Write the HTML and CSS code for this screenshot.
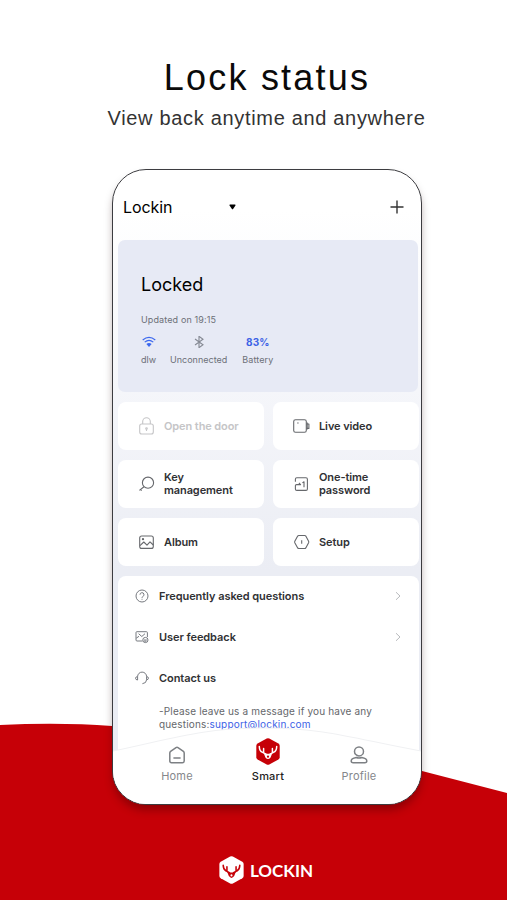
FILE: index.html
```
<!DOCTYPE html>
<html lang="en">
<head>
  <meta charset="UTF-8">
  <meta name="viewport" content="width=device-width, initial-scale=1.0">
  <title>Lockin</title>
  <link rel="stylesheet" href="styles.css">
</head>
<body>
  <svg class="wave" viewBox="0 0 507 180" aria-hidden="true">
    <path d="M0 5Q60 2 112 6Q270 17 422 51L507 73V180H0Z" fill="#c60007"/>
  </svg>
  <main class="page">
    <h1 class="page__title">Lock status</h1>
    <p class="page__subtitle">View back anytime and anywhere</p>

    <div class="phone">
      <header class="header">
        <span class="header__name">Lockin</span>
        <svg class="header__arrow" viewBox="0 0 7 6"><path d="M.8.5H6.2L6.6 1.3 3.9 5.3H3.1L.4 1.3Z"/></svg>
        <svg class="header__plus" viewBox="0 0 14 14"><path d="M7 .5V13.5M.5 7H13.5" stroke="#333" stroke-width="1.4"/></svg>
      </header>

      <section class="status">
        <h2 class="status__title">Locked</h2>
        <p class="status__time">Updated on 19:15</p>
        <div class="status__list">
          <div class="status__item status__item_wifi">
            <svg class="status__icon" viewBox="0 0 14 12" fill="none" stroke="#3c68ee" stroke-width="1.2">
              <path d="M.7 4Q7-1.2 13.3 4M2.7 6.1Q7 2.6 11.3 6.1"/>
              <path d="M4.4 8Q7 5.8 9.6 8L7 11Z" fill="#3c68ee" stroke="none"/>
            </svg>
            <span>dlw</span>
          </div>
          <div class="status__item status__item_bluetooth">
            <svg class="status__icon" viewBox="0 0 14 12" fill="none" stroke="#858993" stroke-width="1.1">
              <path d="M3 3L11 8.8 7 11.7V.3L11 3.2 3 9"/>
            </svg>
            <span>Unconnected</span>
          </div>
          <div class="status__item status__item_battery">
            <b class="status__percent">83%</b>
            <span>Battery</span>
          </div>
        </div>
      </section>

      <section class="actions">
        <div class="card card_disabled">
          <svg class="card__icon" viewBox="0 0 18 18">
            <rect x="1.7" y="7" width="13.6" height="10" rx="2"/>
            <path d="M4.7 7V4.6a3.8 3.8 0 0 1 7.6 0V7M8.5 12.3v1.8"/>
            <circle cx="8.5" cy="11.5" r=".8"/>
          </svg>
          <span>Open the door</span>
        </div>
        <div class="card">
          <svg class="card__icon" viewBox="0 0 18 18">
            <rect x=".7" y="2.7" width="12.6" height="12.6" rx="1.8"/>
            <path d="M13.3 7h2.6v4.4h-2.6M14.2 5.6v7M4.2 6h1.4"/>
          </svg>
          <span>Live video</span>
        </div>
        <div class="card">
          <svg class="card__icon" viewBox="0 0 18 18">
            <circle cx="10" cy="7.7" r="5.6"/>
            <path d="M6 11.8L1.4 15.4M2.6 14.5l1 1.1"/>
          </svg>
          <span>Key<br>management</span>
        </div>
        <div class="card">
          <svg class="card__icon" viewBox="0 0 18 18">
            <path d="M2.4 6.7V4.2Q2.4 2.8 3.8 2.8H13Q14.4 2.8 14.4 4.2V14Q14.4 15.4 13 15.4H3.8Q2.4 15.4 2.4 14V10.6Q2.4 9.6 3.6 9.6H7.6L5.9 8M9.4 7.9L11 6.8V12.2"/>
          </svg>
          <span>One-time<br>password</span>
        </div>
        <div class="card">
          <svg class="card__icon" viewBox="0 0 18 18">
            <rect x="1.7" y="3" width="13.6" height="12.4" rx="2"/>
            <path d="M2 12.6L5.8 9 9 12.2 12 8.8 15.3 12"/>
            <circle cx="5" cy="6.2" r=".6"/>
          </svg>
          <span>Album</span>
        </div>
        <div class="card">
          <svg class="card__icon" viewBox="0 0 18 18">
            <path d="M5.7 2.5H11.8Q12.4 2.5 12.8 3.1L15.6 8.3Q15.9 9 15.6 9.7L12.8 14.9Q12.4 15.5 11.8 15.5H5.7Q5.1 15.5 4.7 14.9L1.8 9.7Q1.5 9 1.8 8.3L4.7 3.1Q5.1 2.5 5.7 2.5ZM8.7 7.3V10.8"/>
          </svg>
          <span>Setup</span>
        </div>
      </section>

      <section class="help">
        <div class="help__row">
          <svg class="help__icon" viewBox="0 0 14 14">
            <circle cx="7" cy="7" r="6"/>
            <path d="M5 5.7a2 2 0 1 1 2.8 1.8Q7 7.9 7 8.8M7 9.8v.9"/>
          </svg>
          <span>Frequently asked questions</span>
          <svg class="help__arrow" viewBox="0 0 6 10"><path d="M1 1.2L5 5 1 8.8"/></svg>
        </div>
        <div class="help__row">
          <svg class="help__icon" viewBox="0 0 14 14">
            <path d="M7.5 11H2Q1 11 1 10V2.5Q1 1.7 2 1.7H11.4Q12.4 1.7 12.4 2.6V7M3.6 3.7L6.8 6.5 10 3.7M1.2 8.2L4 6.3"/>
            <circle cx="10.4" cy="10" r="2.6"/><path d="M9 10h2.8M9.3 11.2h2"/>
          </svg>
          <span>User feedback</span>
          <svg class="help__arrow" viewBox="0 0 6 10"><path d="M1 1.2L5 5 1 8.8"/></svg>
        </div>
        <div class="help__row">
          <svg class="help__icon" viewBox="0 0 14 14">
            <path d="M2.6 9V5.6a4.5 4.5 0 0 1 9 0V8.8Q11.4 12.3 7.4 12.7M2.6 5.6Q.5 5.8.5 7.2 .5 8.8 2.6 9M11.6 5.6Q13.5 5.8 13.5 7.2 13.5 8.6 11.6 8.8"/>
          </svg>
          <span>Contact us</span>
        </div>
        <p class="help__text">-Please leave us a message if you have any<br>questions:<a class="help__link">support@lockin.com</a></p>
      </section>

      <nav class="tabs">
        <svg class="tabs__back" viewBox="0 0 307 77" preserveAspectRatio="none">
          <path d="M0 24C62 11 88 1 151 1C214 1 245 13 307 24V77H0Z" fill="#fff"/>
          <path d="M0 24C62 11 88 1 151 1C214 1 245 13 307 24" fill="none" stroke="#f0f1f3"/>
        </svg>
        <div class="tab tab_home">
          <svg class="tab__icon" viewBox="0 0 18 18">
            <path d="M1.8 7Q1.8 6 2.6 5.4L8 1.6Q9 1 10 1.6L15.4 5.4Q16.2 6 16.2 7V15Q16.2 16.7 14.5 16.7H3.5Q1.8 16.7 1.8 15ZM5.4 12H12.6"/>
          </svg>
          <span>Home</span>
        </div>
        <div class="tab tab_smart">
          <svg class="tab__logo" viewBox="0 0 24 27">
            <path d="M10.7.5Q12 0 13.3.5L22.4 5.6Q23.7 6.4 23.7 7.8V19.2Q23.7 20.6 22.4 21.4L13.3 26.5Q12 27 10.7 26.5L1.6 21.4Q.3 20.6.3 19.2V7.8Q.3 6.4 1.6 5.6Z" fill="#c60007"/>
            <path d="M3.3 8.4Q3.4 13 6.6 14.4L10 16.2M20.7 8.4Q20.6 13 17.4 14.4L14 16.2M7.6 10.4V14.6M16.4 10.4V14.6" fill="none" stroke="#fff" stroke-width="1.5" stroke-linecap="round"/>
            <path d="M7.6 14.8L10.5 15.8H13.5L16.4 14.8 14.6 19.4Q12 22.8 9.4 19.4Z" fill="#fff"/><circle cx="12" cy="18.7" r="1.1" fill="#c60007"/>
          </svg>
          <span>Smart</span>
        </div>
        <div class="tab tab_profile">
          <svg class="tab__icon" viewBox="0 0 18 18">
            <circle cx="9" cy="5.4" r="4.5"/>
            <path d="M6.2 11.5Q1.2 12.4 1.2 15Q1.2 16.7 3 16.7H15Q16.8 16.7 16.8 15Q16.8 12.4 11.8 11.5Q9 12.6 6.2 11.5Z"/>
          </svg>
          <span>Profile</span>
        </div>
      </nav>
    </div>

    <footer class="brand">
      <svg class="brand__logo" viewBox="0 0 24 27">
        <path d="M10.7.5Q12 0 13.3.5L22.4 5.6Q23.7 6.4 23.7 7.8V19.2Q23.7 20.6 22.4 21.4L13.3 26.5Q12 27 10.7 26.5L1.6 21.4Q.3 20.6.3 19.2V7.8Q.3 6.4 1.6 5.6Z" fill="#fff"/>
        <path d="M4 9Q4 13 6.8 14.4L10 16.2M20 9Q20 13 17.2 14.4L14 16.2M7.6 10.4V14.6M16.4 10.4V14.6" fill="none" stroke="#c60007" stroke-width="1.5" stroke-linecap="round"/>
        <path d="M7.6 14.8L10.5 15.8H13.5L16.4 14.8 14.6 19.4Q12 22.8 9.4 19.4Z" fill="#c60007"/><circle cx="12" cy="18.7" r="1" fill="#fff"/>
      </svg>
      <span class="brand__name">LOCKIN</span>
    </footer>
  </main>
</body>
</html>
```
FILE: styles.css
```
* {
  box-sizing: border-box;
}

body {
  position: relative;
  margin: 0;
  height: 900px;
  overflow: hidden;
  background: #fff;
  font-family: Inter, "Liberation Sans", sans-serif;
}

h1,
h2,
p {
  margin: 0;
  font-weight: 400;
}

svg {
  display: block;
  flex: none;
}

/* red wave behind the phone */
.wave {
  position: absolute;
  left: 0;
  bottom: 0;
  width: 507px;
  height: 180px;
}

.page {
  position: relative;
  display: flex;
  flex-direction: column;
  align-items: center;
  height: 900px;
  padding-top: 57px;
}

.page__title {
  padding-left: 27px;
  height: 42px;
  line-height: 42px;
  font-family: "Liberation Sans", sans-serif;
  font-size: 36px;
  letter-spacing: 2.2px;
  color: #0a0a0a;
}

.page__subtitle {
  padding-left: 26px;
  height: 38px;
  line-height: 38px;
  font-family: "Liberation Sans", sans-serif;
  font-size: 20px;
  letter-spacing: 0.68px;
  color: #333;
}

.phone {
  display: flex;
  flex-direction: column;
  width: 310px;
  height: 636px;
  margin: 32px 0 0 27px;
  overflow: hidden;
  border: 1.5px solid #3c3c40;
  border-radius: 34px;
  background: linear-gradient(#fff 0, #fff 40px, #f5f6fa 220px, #ebedf4 400px);
  box-shadow: 0 6px 8px -1px rgba(40, 0, 0, 0.35);
}

.header {
  display: flex;
  align-items: center;
  height: 70px;
  padding: 4px 17px 0 10px;
}

.header__name {
  width: 106px;
  font-size: 16px;
  letter-spacing: -0.1px;
  color: #000;
}

.header__arrow {
  width: 7px;
  height: 6px;
}

.header__plus {
  width: 14px;
  height: 14px;
  margin-left: auto;
}

.status {
  height: 152px;
  margin: 0 3px 0 5px;
  padding: 34px 23px;
  border-radius: 7px;
  background: #e7eaf5;
}

.status__title {
  height: 22px;
  line-height: 22px;
  font-size: 18px;
  color: #000;
}

.status__time {
  margin-top: 18px;
  line-height: 12px;
  font-size: 9px;
  letter-spacing: 0.12px;
  color: #6d7078;
}

.status__list {
  display: flex;
  margin-top: 10px;
}

.status__item {
  display: flex;
  flex-direction: column;
  align-items: center;
  gap: 6px;
  line-height: 12px;
  font-size: 9px;
  color: #6d7078;
}

.status__item_bluetooth {
  margin-left: 14px;
}

.status__item_battery {
  margin-left: 15px;
  letter-spacing: 0.1px;
}

.status__icon {
  width: 14px;
  height: 12px;
}

.status__percent {
  height: 12px;
  font-size: 10px;
  color: #3c62e6;
}

.actions {
  display: grid;
  grid-template-columns: 146px 146px;
  grid-auto-rows: 48px;
  gap: 10px 9px;
  margin: 10px 0 0 5px;
}

.card {
  display: flex;
  align-items: center;
  gap: 8px;
  padding-left: 20px;
  border-radius: 8px;
  background: #fff;
  line-height: 13px;
  font-size: 11px;
  font-weight: 600;
  letter-spacing: -0.1px;
  color: #303134;
}

.card_disabled {
  color: #c5c5c7;
}

.card__icon {
  width: 18px;
  height: 18px;
  fill: none;
  stroke: #66686c;
  stroke-width: 1.1;
  stroke-linejoin: round;
}

.card_disabled .card__icon {
  stroke: #c5c5c7;
}

.help {
  flex: 1;
  margin: 10px 2px 0 5px;
  border-radius: 8px 8px 0 0;
  background: #fff;
}

.help__row {
  display: flex;
  align-items: center;
  gap: 10px;
  height: 41px;
  padding: 0 18px 2px 17px;
  font-size: 11px;
  font-weight: 600;
  letter-spacing: -0.06px;
  color: #303134;
}

.help__icon {
  width: 14px;
  height: 14px;
  fill: none;
  stroke: #777a80;
  stroke-width: 1;
}

.help__arrow {
  width: 6px;
  height: 10px;
  margin-left: auto;
  fill: none;
  stroke: #b9bbbe;
}

.help__text {
  padding: 6px 0 0 41px;
  line-height: 13px;
  font-size: 10px;
  letter-spacing: 0.16px;
  color: #65676b;
}

.help__link {
  letter-spacing: 0.2px;
  color: #3c62e6;
}

.tabs {
  position: relative;
  display: flex;
  height: 77px;
  margin-top: -50px;
}

.tabs__back {
  position: absolute;
  left: 0;
  top: 0;
  width: 100%;
  height: 100%;
}

.tab {
  position: relative;
  display: flex;
  flex-direction: column;
  align-items: center;
  width: 91px;
  padding-top: 19px;
  font-size: 11px;
  line-height: 14px;
  letter-spacing: 0.2px;
  color: #85878b;
}

.tab_home {
  margin-left: 18.5px;
}

.tab_smart {
  padding-top: 11px;
  color: #222;
  font-weight: 500;
}

.tab__icon {
  width: 18px;
  height: 18px;
  margin-bottom: 5px;
  fill: none;
  stroke: #7d8084;
  stroke-width: 1.5;
}

.tab__logo {
  width: 24px;
  height: 27px;
  margin-bottom: 4px;
}

.brand {
  display: flex;
  align-items: center;
  gap: 6px;
  height: 28px;
  margin: 51px 0 0 25px;
}

.brand__logo {
  width: 25px;
  height: 28px;
}

.brand__name {
  font-family: Lato, sans-serif;
  font-size: 17px;
  font-weight: 700;
  color: #fff;
}
```
